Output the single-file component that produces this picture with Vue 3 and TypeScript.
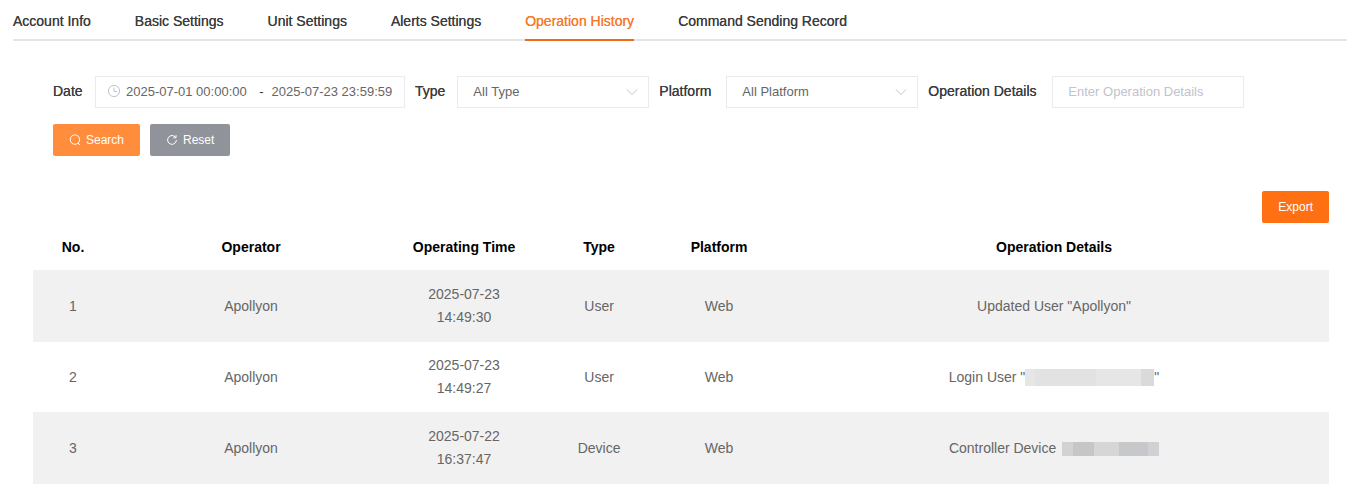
<script setup lang="ts">
import { ref } from 'vue'

type Mask = { kind: string; tones: string[] }
interface Row {
  no: number
  operator: string
  date: string
  time: string
  type: string
  platform: string
  before: string
  mask?: Mask
  after?: string
}

const tabs = ['Account Info', 'Basic Settings', 'Unit Settings', 'Alerts Settings', 'Operation History', 'Command Sending Record']
const active = ref('Operation History')

const start = ref('2025-07-01 00:00:00')
const end = ref('2025-07-23 23:59:59')
const type = ref('All Type')
const platform = ref('All Platform')
const details = ref('')

const rows: Row[] = [
  { no: 1, operator: 'Apollyon', date: '2025-07-23', time: '14:49:30', type: 'User', platform: 'Web', before: 'Updated User "Apollyon"' },
  { no: 2, operator: 'Apollyon', date: '2025-07-23', time: '14:49:27', type: 'User', platform: 'Web', before: 'Login User "', mask: { kind: 'mask-user', tones: ['t1', 't2', 't3', 't4'] }, after: '"' },
  { no: 3, operator: 'Apollyon', date: '2025-07-22', time: '16:37:47', type: 'Device', platform: 'Web', before: 'Controller Device ', mask: { kind: 'mask-device', tones: ['d1', 'd2', 'd3', 'd4', 'd5'] } },
]
</script>

<template>
  <main class="page">
    <nav class="tabs">
      <a v-for="t in tabs" :key="t" href="#" class="tab" :class="{ active: t === active }" @click.prevent="active = t">{{ t }}</a>
    </nav>

    <form class="filters" @submit.prevent>
      <div class="field">
        <label for="start" class="short">Date</label>
        <div class="range">
          <svg class="clock" viewBox="0 0 14 14" width="14" height="14" aria-hidden="true">
            <circle cx="7" cy="7" r="5.6" />
            <path d="M7 3.6V7.4H10" />
          </svg>
          <input id="start" v-model="start" type="text" />
          <span class="dash">-</span>
          <input id="end" v-model="end" type="text" aria-label="End date" />
        </div>
      </div>
      <div class="field">
        <label for="type" class="short">Type</label>
        <div class="select">
          <select id="type" v-model="type"><option>All Type</option></select>
          <svg viewBox="0 0 12 12" width="12" height="12" aria-hidden="true"><path d="M1 3.5L6 8.5L11 3.5" /></svg>
        </div>
      </div>
      <div class="field">
        <label for="platform" class="medium">Platform</label>
        <div class="select">
          <select id="platform" v-model="platform"><option>All Platform</option></select>
          <svg viewBox="0 0 12 12" width="12" height="12" aria-hidden="true"><path d="M1 3.5L6 8.5L11 3.5" /></svg>
        </div>
      </div>
      <div class="field">
        <label for="details" class="wide">Operation Details</label>
        <input id="details" v-model="details" class="text" type="text" placeholder="Enter Operation Details" />
      </div>
      <div class="actions">
        <button type="submit" class="btn search">
          <svg viewBox="0 0 12 12" width="12" height="12" aria-hidden="true">
            <circle cx="5.9" cy="5.6" r="4.7" />
            <path d="M9 9L10.8 11" />
          </svg>
          <span>Search</span>
        </button>
        <button type="button" class="btn reset">
          <svg viewBox="0 0 12 12" width="12" height="12" aria-hidden="true">
            <path d="M9.6 3.4A4.4 4.4 0 1 0 10.4 6" />
            <path d="M10 1.2V3.8H7.4" />
          </svg>
          <span>Reset</span>
        </button>
      </div>
    </form>

    <section class="history">
      <div class="toolbar"><button type="button" class="btn export">Export</button></div>
      <table>
        <colgroup>
          <col class="c-no" />
          <col class="c-operator" />
          <col class="c-time" />
          <col class="c-short" />
          <col class="c-short" />
          <col />
        </colgroup>
        <thead>
          <tr>
            <th>No.</th>
            <th>Operator</th>
            <th>Operating Time</th>
            <th>Type</th>
            <th>Platform</th>
            <th>Operation Details</th>
          </tr>
        </thead>
        <tbody>
          <tr v-for="r in rows" :key="r.no">
            <td>{{ r.no }}</td>
            <td>{{ r.operator }}</td>
            <td>{{ r.date }}<br />{{ r.time }}</td>
            <td>{{ r.type }}</td>
            <td>{{ r.platform }}</td>
            <td class="detail">{{ r.before }}<span v-if="r.mask" class="mask" :class="r.mask.kind"><i v-for="t in r.mask.tones" :key="t" :class="t"></i></span>{{ r.after }}</td>
          </tr>
        </tbody>
      </table>
    </section>
  </main>
</template>

<style>
body {
  margin: 0;
  background: #fff;
}
</style>

<style scoped>
.page,
.page input,
.page select,
.page button {
  font-family: "Liberation Sans", Arial, sans-serif;
}
.page {
  font-size: 14px;
  color: #666;
}
svg {
  fill: none;
  stroke: currentColor;
  stroke-width: 1;
  flex: none;
}
.tabs {
  display: flex;
  gap: 44px;
  margin-left: 13px;
  border-bottom: 2px solid #e5e5e5;
}
.tab {
  height: 41px;
  margin-bottom: -2px;
  box-sizing: border-box;
  border-bottom: 2px solid transparent;
  line-height: 42px;
  color: #3c3d3f;
  text-decoration: none;
  white-space: nowrap;
  text-shadow: 0 0 currentColor;
}
.tab.active {
  color: #f67a2c;
  border-color: #ee6d12;
}
.filters {
  display: flex;
  flex-wrap: wrap;
  gap: 16px 10px;
  padding: 35px 53px 0;
}
.field {
  display: flex;
  align-items: center;
  gap: 12px;
}
.field label {
  padding-bottom: 2px;
  color: #3c3d3f;
  white-space: nowrap;
  text-shadow: 0 0 currentColor;
}
.short {
  min-width: 30px;
}
.medium {
  min-width: 55px;
}
.wide {
  min-width: 112px;
}
.range,
.select select,
.text {
  box-sizing: border-box;
  height: 32px;
  border: 1px solid #ebebeb;
  background: #fff;
  color: #666;
  font-size: 13px;
  outline: none;
}
.range {
  display: flex;
  align-items: center;
  width: 310px;
  padding: 0 7px 2px 11px;
}
.range input {
  flex: 1;
  min-width: 0;
  padding: 0;
  border: 0;
  background: none;
  color: inherit;
  font-size: 13px;
  outline: none;
}
.clock {
  margin-right: 5px;
  color: #c0c4cc;
}
.dash {
  width: 20px;
  color: #303133;
  text-align: center;
}
.select {
  position: relative;
  width: 192px;
}
.select select {
  width: 100%;
  padding: 0 30px 2px 15px;
  appearance: none;
  border-radius: 0;
}
.select svg {
  position: absolute;
  right: 11px;
  top: 10px;
  color: #c0c4cc;
  pointer-events: none;
}
.text {
  width: 192px;
  padding: 0 15px 2px;
}
.text::placeholder {
  color: #c0c4cc;
}
.actions {
  display: flex;
  flex-basis: 100%;
  gap: 10px;
}
.btn {
  display: inline-flex;
  align-items: center;
  gap: 5px;
  height: 32px;
  padding: 0 16px;
  border: 0;
  border-radius: 2px;
  color: #fff;
  font-size: 12px;
}
.search {
  background: #ff8d3c;
}
.reset {
  background: #909399;
}
.export {
  background: #ff7012;
}
.history {
  padding: 35px 18px 0 33px;
}
.toolbar {
  display: flex;
  justify-content: flex-end;
}
table {
  width: 100%;
  table-layout: fixed;
  border-collapse: separate;
  border-spacing: 0;
  line-height: 23px;
}
.c-no {
  width: 80px;
}
.c-operator {
  width: 21.3%;
}
.c-time {
  width: 150px;
}
.c-short {
  width: 120px;
}
th,
td {
  padding: 12px 10px;
  border-bottom: 1px solid #f1f1f1;
  text-align: center;
}
th {
  padding: 13px 10px 11px;
  color: #000;
  font-weight: 700;
}
tbody tr:nth-child(odd) td {
  background: #f1f1f1;
}
.detail {
  white-space: pre-wrap;
}
.mask {
  display: inline-flex;
  vertical-align: middle;
}
.mask i {
  flex: 1;
}
.mask-user {
  width: 129px;
  height: 17px;
}
.mask-device {
  width: 97px;
  height: 14px;
  margin-left: 2px;
}
.mask .t1 { flex: 10; background: #e6e6e6; }
.mask .t2 { flex: 60; background: #e2e2e2; }
.mask .t3 { flex: 45; background: #e6e6e6; }
.mask .t4 { flex: 13; background: #dadada; }
.mask .d1 { flex: 11; background: #d2d2d2; }
.mask .d2 { flex: 21; background: #c5c7c7; }
.mask .d3 { flex: 25; background: #d6d6d7; }
.mask .d4 { flex: 29; background: #c7c8c9; }
.mask .d5 { flex: 11; background: #d1d1d5; }
</style>
